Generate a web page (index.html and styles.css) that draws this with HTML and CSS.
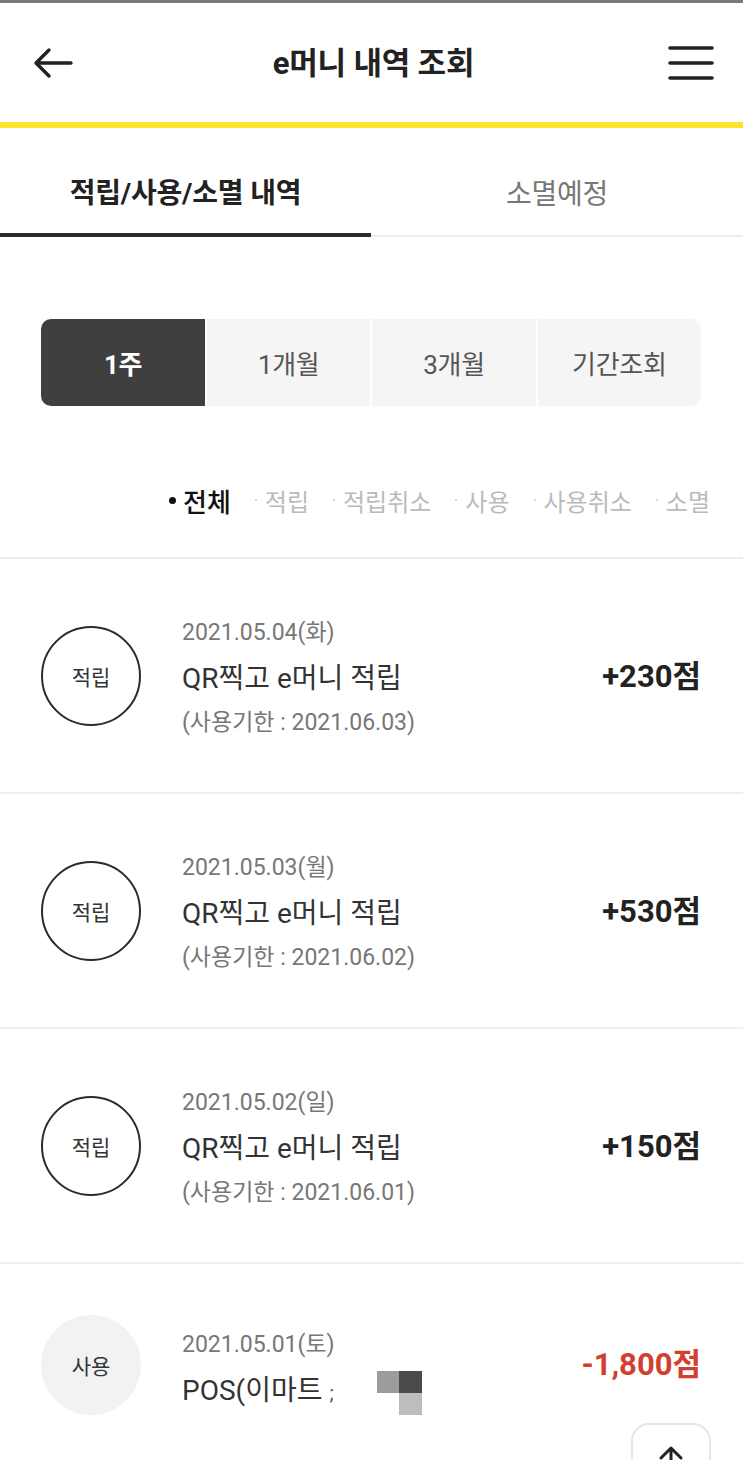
FILE: index.html
```html
<!DOCTYPE html>
<html lang="ko">
<head>
<meta charset="utf-8">
<link rel="stylesheet" href="styles.css">
</head>
<body>
<div class="page">
  <header class="header">
    <svg class="icon back" width="44" height="36" viewBox="0 0 44 36">
      <path d="M6 18H40M18 5L5 18L18 31" fill="none" stroke="#222" stroke-width="3.4" stroke-linecap="round" stroke-linejoin="round"/>
    </svg>
    <h1 class="title">e머니 내역 조회</h1>
    <svg class="icon menu" width="46" height="36" viewBox="0 0 46 36">
      <path d="M2 3H44M2 18H44M2 33H44" fill="none" stroke="#222" stroke-width="3.6" stroke-linecap="round"/>
    </svg>
  </header>
  <div class="yellow"></div>

  <nav class="tabs">
    <div class="tab active">적립/사용/소멸 내역</div>
    <div class="tab">소멸예정</div>
  </nav>

  <div class="segment">
    <div class="seg on">1주</div>
    <div class="seg">1개월</div>
    <div class="seg">3개월</div>
    <div class="seg">기간조회</div>
  </div>

  <div class="filters">
    <span class="f on">전체</span>
    <span class="f">적립</span>
    <span class="f">적립취소</span>
    <span class="f">사용</span>
    <span class="f">사용취소</span>
    <span class="f">소멸</span>
  </div>

  <ul class="list">
    <li class="item">
      <div class="badge">적립</div>
      <div class="info">
        <div class="date">2021.05.04(화)</div>
        <div class="name">QR찍고 e머니 적립</div>
        <div class="exp">(사용기한 : 2021.06.03)</div>
      </div>
      <div class="amt">+230점</div>
    </li>
    <li class="item">
      <div class="badge">적립</div>
      <div class="info">
        <div class="date">2021.05.03(월)</div>
        <div class="name">QR찍고 e머니 적립</div>
        <div class="exp">(사용기한 : 2021.06.02)</div>
      </div>
      <div class="amt">+530점</div>
    </li>
    <li class="item">
      <div class="badge">적립</div>
      <div class="info">
        <div class="date">2021.05.02(일)</div>
        <div class="name">QR찍고 e머니 적립</div>
        <div class="exp">(사용기한 : 2021.06.01)</div>
      </div>
      <div class="amt">+150점</div>
    </li>
    <li class="item last">
      <div class="badge use">사용</div>
      <div class="info">
        <div class="date">2021.05.01(토)</div>
        <div class="name redacted">POS(이마트 <span class="cut">;</span>
          <span class="mosaic"><i class="m1"></i><i class="m2"></i><i class="m0"></i><i class="m3"></i></span>
        </div>
      </div>
      <div class="amt red">-1,800점</div>
    </li>
  </ul>

  <div class="totop">
    <svg width="30" height="30" viewBox="0 0 30 30">
      <path d="M15 28V6M5 15L15 5L25 15" fill="none" stroke="#222" stroke-width="3" stroke-linecap="round" stroke-linejoin="round"/>
    </svg>
  </div>
</div>
</body>
</html>
```

FILE: styles.css
```css
* { box-sizing: border-box; margin: 0; padding: 0; }
html, body { background: #fff; }
body {
  font-family: Roboto, "Noto Sans CJK KR", "Noto Sans", sans-serif;
  color: #222;
  width: 743px;
  height: 1460px;
  overflow: hidden;
}
.page { position: relative; width: 743px; height: 1460px; border-top: 3px solid #7a7a7a; }

.header {
  height: 119px;
  display: flex;
  align-items: center;
  justify-content: space-between;
  padding: 0 29px 0 31px;
}
.title {
  font-size: 31px;
  font-weight: 700;
  letter-spacing: -0.2px;
  color: #222;
  margin-left: 4px;
  margin-bottom: 4px;
}
.icon { display: block; }
.yellow { height: 6px; background: #fde52b; }

.tabs {
  display: flex;
  height: 109px;
}
.tab {
  flex: 1;
  display: flex;
  align-items: center;
  justify-content: center;
  font-size: 28px;
  color: #777;
  letter-spacing: -0.2px;
  border-bottom: 2px solid #ececec;
  padding-top: 20px;
}
.tab.active {
  flex: 0 0 371px;
  color: #222;
  font-weight: 700;
  letter-spacing: -0.2px;
  border-bottom: 4px solid #2a2a2a;
}

.segment {
  display: flex;
  margin: 82px 42px 0 41px;
  height: 87px;
  border-radius: 10px;
  overflow: hidden;
  gap: 2px;
  background: #fff;
}
.seg {
  flex: 1;
  background: #f5f5f5;
  display: flex;
  align-items: center;
  justify-content: center;
  font-size: 26px;
  color: #555;
  letter-spacing: -0.3px;
}
.seg.on { background: #3f3f3f; color: #fff; font-weight: 700; flex: 0 0 164px; }

.filters {
  display: flex;
  justify-content: flex-end;
  align-items: center;
  gap: 24px;
  height: 153px;
  padding: 37px 33px 0 0;
  border-bottom: 2px solid #eeeeee;
}
.f {
  font-size: 24px;
  color: #bbb;
  display: flex;
  align-items: center;
}
.f::before {
  content: "";
  width: 2px; height: 2px;
  border-radius: 50%;
  background: #ccc;
  margin-right: 8px;
}
.f.on { color: #111; font-size: 26px; font-weight: 500; }
.f.on::before { width: 7px; height: 7px; background: #111; margin-right: 7px; }

.list { list-style: none; }
.item {
  display: flex;
  align-items: center;
  height: 235px;
  padding: 0 42px 0 41px;
  border-bottom: 2px solid #f0f0f0;
}
.badge {
  width: 100px; height: 100px;
  border-radius: 50%;
  border: 2px solid #2b2b2b;
  display: flex;
  align-items: center;
  justify-content: center;
  font-size: 21px;
  color: #333;
  flex: none;
}
.badge.use { border: none; background: #f2f2f2; }
.info { flex: 1; padding: 3px 0 0 41px; display: flex; flex-direction: column; }
.date { font-size: 23px; color: #777; line-height: 42px; }
.name { font-size: 28px; color: #333; line-height: 50px; }
.exp { font-size: 23px; color: #777; line-height: 38px; }
.amt { font-size: 31px; font-weight: 700; color: #222; margin-top: -4px; }
.amt.red { color: #d23f2f; }
.item.last { align-items: flex-start; padding-top: 57px; }
.item.last .badge { margin-top: -6px; }
.item.last .amt { margin-top: 18px; }

.redacted { position: relative; }
.cut { font-size: 20px; color: #555; }
.mosaic {
  position: absolute;
  left: 195px;
  top: 5px;
  display: grid;
  grid-template-columns: 22px 23px;
  grid-template-rows: 22px 22px;
}
.mosaic i { display: block; }
.m1 { background: #9c9c9c; }
.m2 { background: #4a4a4a; }
.m0 { background: transparent; }
.m3 { background: #bdbdbd; }

.totop {
  position: absolute;
  left: 631px;
  top: 1420px;
  width: 80px;
  height: 80px;
  border: 2px solid #e6e6e6;
  border-radius: 18px;
  background: #fff;
  display: flex;
  justify-content: center;
  padding-top: 18px;
}
```
